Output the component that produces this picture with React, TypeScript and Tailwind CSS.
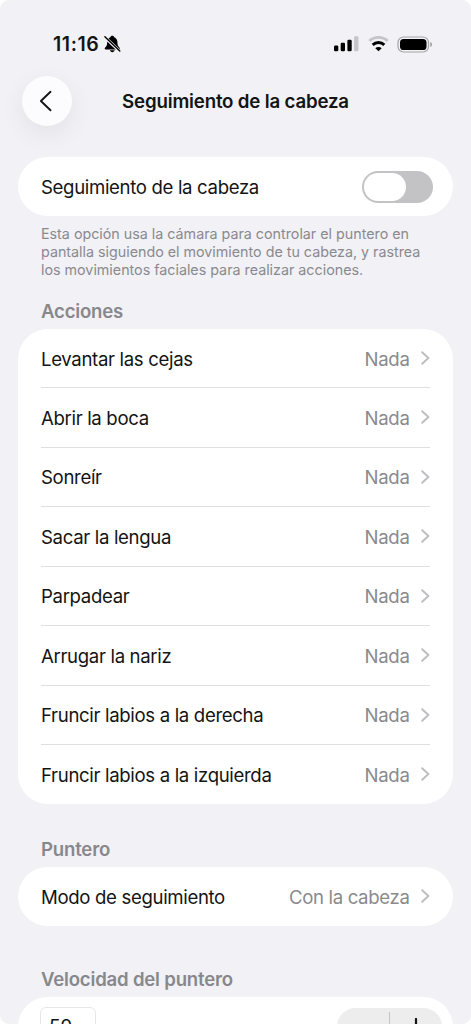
import type { ReactNode } from "react";

const actions = [
  "Levantar las cejas",
  "Abrir la boca",
  "Sonreír",
  "Sacar la lengua",
  "Parpadear",
  "Arrugar la nariz",
  "Fruncir labios a la derecha",
  "Fruncir labios a la izquierda",
];

function Chevron() {
  return (
    <svg className="ml-3 h-[14px] w-[9px]" viewBox="0 0 9 14" fill="none">
      <path
        d="M1.2 1.2 7.4 7l-6.2 5.8"
        stroke="#bfbfc2"
        strokeWidth="2"
        strokeLinecap="round"
        strokeLinejoin="round"
      />
    </svg>
  );
}

function Row({ label, value }: { label: string; value: string }) {
  return (
    <div className="flex flex-1 items-center justify-between">
      <span className="pt-[3px]">{label}</span>
      <span className="flex items-center text-[#8a8a8d]">
        <span className="-mr-[0.5px] pt-[3px]">{value}</span>
        <Chevron />
      </span>
    </div>
  );
}

function SectionTitle({ children }: { children: ReactNode }) {
  return (
    <h2 className="h-6 pl-[23px] text-[18.6px] leading-[25px] font-semibold tracking-[-0.2px] text-[#88888c]">
      {children}
    </h2>
  );
}

function StatusBar() {
  return (
    <div className="flex h-[30px] items-center justify-between pr-[20px] pl-[35px]">
      <div className="flex items-center gap-[5px]">
        <span className="pt-px text-[19.5px] font-semibold tracking-[0.6px]">11:16</span>
        <svg className="h-[18px] w-[17px]" viewBox="0 0 17 18">
          <path
            d="M8.3.8c-1 0-1.700.6-1.900 1.400C4.300 3 3.200 4.900 3.200 7.100c0 3.200-.7 4.300-2 5.500-.9.900-.6 1.800.5 1.800h13.200c1.100 0 1.400-.9.500-1.800-1.300-1.200-2-2.300-2-5.500 0-2.200-1.100-4.100-3.200-4.900C10 1.400 9.300.8 8.300.8ZM5.900 15.300c.3 1.100 1.200 1.900 2.400 1.900s2.100-.8 2.400-1.900Z"
            fill="#000"
          />
          <path d="M.8 2 15.800 16.300" stroke="#f1f1f6" strokeWidth="3.100" />
          <path d="M.9 1.800 15.800 16" stroke="#000" strokeWidth="1.400" strokeLinecap="round" />
        </svg>
      </div>
      <div className="flex items-center">
        <svg className="h-4 w-[25px]" viewBox="0 0 25 16">
          <rect x="0" y="9.500" width="4.300" height="5.800" rx="1.200" />
          <rect x="6.700" y="6.800" width="4.300" height="8.500" rx="1.200" />
          <rect x="13.400" y="3.700" width="4.300" height="11.600" rx="1.200" />
          <rect x="20.100" y="0.300" width="4.300" height="15" rx="1.200" fill="#c5c5c9" />
        </svg>
        <svg className="ml-[9px] h-4 w-[21px]" viewBox="0 0 21 16" fill="none">
          <path d="M1.400 5a13.200 13.200 0 0 1 18.200 0" stroke="#c5c5c9" strokeWidth="2.800" />
          <path d="M4.700 8.800a8.600 8.600 0 0 1 11.600 0" stroke="#000" strokeWidth="3" />
          <path d="M10.500 15.200 7.300 12.200a4.600 4.600 0 0 1 6.400 0Z" fill="#000" />
        </svg>
        <svg className="ml-[8px] h-[17px] w-[36px]" viewBox="0 0 36 17" fill="none">
          <rect x="1" y="1" width="30.500" height="15" rx="5.500" stroke="#a4a4a7" strokeWidth="1.200" />
          <rect x="3" y="3" width="26.500" height="11" rx="3.600" fill="#000" />
          <path d="M33.200 6c1.200.3 1.900 1.300 1.900 2.500s-.7 2.200-1.900 2.500Z" fill="#a4a4a7" />
        </svg>
      </div>
    </div>
  );
}

export default function App() {
  return (
    <div className="h-[1024px] w-[471px] overflow-hidden bg-white">
      <div className="flex h-full flex-col rounded-[9px] bg-[#f1f1f6] px-[18px] pt-[29px] font-[Inter,sans-serif] text-[18.6px] tracking-[-0.34px] text-[#141414]">
        <StatusBar />

        {/* Header */}
        <header className="mt-[17px] grid h-[50px] shrink-0 grid-cols-[50px_1fr_50px] items-center pr-1 pl-1">
          <button className="flex size-[50px] items-center justify-center rounded-full bg-[#fcfcff] shadow-[0_8px_26px_rgba(0,0,0,0.065)]">
            <svg className="mr-[3px] h-[22px] w-[13px]" viewBox="0 0 13 22" fill="none">
              <path
                d="M11.500 1.800 1.900 11l9.600 9.300"
                stroke="#151515"
                strokeWidth="1.900"
                strokeLinecap="round"
                strokeLinejoin="round"
              />
            </svg>
          </button>
          <h1 className="pt-[3px] text-center text-[18.7px] font-semibold tracking-[-0.18px] whitespace-nowrap">
            Seguimiento de la cabeza
          </h1>
        </header>

        <div className="mt-[31px] flex h-[59px] shrink-0 items-center justify-between rounded-full bg-white pr-5 pl-[23px]">
          <span className="pt-[3px]">Seguimiento de la cabeza</span>
          <button className="flex h-8 w-[71px] items-center rounded-full bg-[#c3c3c5] p-[2px]">
            <span className="h-7 w-[42px] rounded-full bg-white" />
          </button>
        </div>
        <p className="mt-[9px] shrink-0 pl-[23px] text-[14.3px] leading-[18px] tracking-[-0.01px] whitespace-nowrap text-[#8a8a8e]">
          Esta opción usa la cámara para controlar el puntero en
          <br />
          pantalla siguiendo el movimiento de tu cabeza, y rastrea
          <br />
          los movimientos faciales para realizar acciones.
        </p>

        {/* Facial actions */}
        <section className="mt-[20px] shrink-0">
          <SectionTitle>Acciones</SectionTitle>
          <ul className="mt-[6px] h-[475px] rounded-[30px] bg-white px-[23px]">
            {actions.map((action) => (
              <li
                key={action}
                className="flex h-[59.5px] border-b border-[#dfdfe1] first:h-[59px] last:h-[59px] last:border-b-0"
              >
                <Row label={action} value="Nada" />
              </li>
            ))}
          </ul>
        </section>

        {/* Pointer */}
        <section className="mt-[33px] shrink-0">
          <SectionTitle>Puntero</SectionTitle>
          <div className="mt-[6px] flex h-[59px] rounded-full bg-white px-[23px]">
            <Row label="Modo de seguimiento" value="Con la cabeza" />
          </div>
        </section>

        <section className="mt-[41px] shrink-0">
          <SectionTitle>Velocidad del puntero</SectionTitle>
          <div className="mt-[6px] flex h-[59px] items-start justify-between rounded-[30px] bg-white pt-[10px] pr-[11px] pl-[22px]">
            <div className="h-[38px] w-[56px] rounded-[6px] border border-[#e6e6e8] pt-[5px] pl-[8px] text-[19px] leading-7">
              50
            </div>
            <div className="mt-px flex h-[37px] w-[105px] items-center rounded-full bg-[#ededee]">
              <div className="flex flex-1 justify-center">
                <span className="h-[2px] w-4 rounded-full bg-[#141414]" />
              </div>
              <span className="h-[29px] w-px bg-[#c4c4c6]" />
              <div className="flex flex-1 justify-center">
                <svg className="h-[18px] w-[18px]" viewBox="0 0 18 18">
                  <path d="M9 1v16M1 9h16" stroke="#141414" strokeWidth="2.200" strokeLinecap="round" />
                </svg>
              </div>
            </div>
          </div>
        </section>
      </div>
    </div>
  );
}
